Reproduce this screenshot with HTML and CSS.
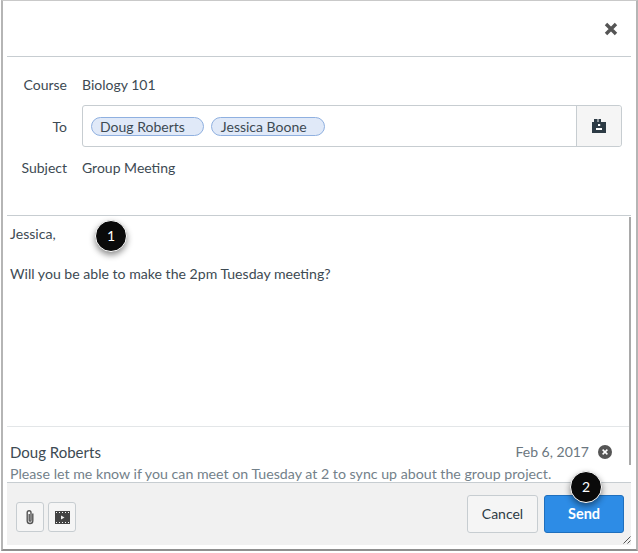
FILE: index.html
```html
<!DOCTYPE html>
<html lang="en">
<head>
<meta charset="utf-8">
<title>Compose Message</title>
<link rel="stylesheet" href="styles.css">
</head>
<body>
<div class="dialog">
  <div class="inner">
    <header class="head">
      <svg class="close" width="14" height="14" viewBox="0 0 14 14"><path d="M2 2l10 10M12 2L2 12" stroke="#555" stroke-width="3.4" fill="none"/></svg>
    </header>
    <section class="fields">
      <div class="row row-course">
        <span class="label">Course</span><span class="value">Biology 101</span>
      </div>
      <div class="row row-to">
        <span class="label">To</span>
        <div class="to-box">
          <div class="to-input">
            <span class="pill">Doug Roberts</span>
            <span class="pill pill-second">Jessica Boone</span>
          </div>
          <div class="to-btn">
            <svg width="14" height="14" viewBox="0 0 14 14"><path fill="#2d3b45" d="M2 0h3.5v3H2zM6.5 0H9v3H6.5zM0 3h14v11H0z"/><path fill="#fff" d="M6 5h2.2v2H6zM4 9h6v2H4z"/></svg>
          </div>
        </div>
      </div>
      <div class="row row-subject">
        <span class="label">Subject</span><span class="value">Group Meeting</span>
      </div>
    </section>
    <section class="body">
      <p class="line">Jessica,</p>
      <p class="line line-2">Will you be able to make the 2pm Tuesday meeting?</p>
      <div class="scrollbar"></div>
    </section>
    <section class="quoted">
      <div class="quoted-top">
        <span class="author">Doug Roberts</span>
        <span class="date">Feb 6, 2017</span>
        <svg class="remove" width="14" height="14" viewBox="0 0 14 14"><circle cx="7" cy="7" r="7" fill="#555"/><path d="M4.6 4.6l4.8 4.8M9.4 4.6l-4.8 4.8" stroke="#fff" stroke-width="1.5"/></svg>
      </div>
      <div class="excerpt">Please let me know if you can meet on Tuesday at 2 to sync up about the group project.</div>
    </section>
    <footer class="foot">
      <div class="tools">
        <button class="tool">
          <svg width="10" height="16" viewBox="0 0 10 16"><path d="M7.8 4.5v7.2a2.8 2.8 0 0 1-5.6 0V3.6a1.9 1.9 0 0 1 3.8 0v7.6a.9.9 0 0 1-1.8 0V5" fill="none" stroke="#555" stroke-width="1.4"/></svg>
        </button>
        <button class="tool">
          <svg width="15" height="13" viewBox="0 0 15 13"><path fill="#444" fill-rule="evenodd" d="M0 0h15v13H0zM1 1v1h1V1zm3 0v1h1V1zm3 0v1h1V1zm3 0v1h1V1zm3 0v1h1V1zM1 11v1h1v-1zm3 0v1h1v-1zm3 0v1h1v-1zm3 0v1h1v-1zm3 0v1h1v-1zM6 4.5v4l3.5-2z"/></svg>
        </button>
      </div>
      <div class="actions">
        <button class="btn btn-cancel">Cancel</button>
        <button class="btn btn-send">Send</button>
      </div>
      <svg class="grip" width="8" height="8" viewBox="0 0 8 8"><path d="M7.5.5l-7 7M7.5 4.5l-3 3" stroke="#555" stroke-width="1"/></svg>
    </footer>
  </div>
  <span class="badge badge-1">1</span>
  <span class="badge badge-2">2</span>
</div>
</body>
</html>
```
FILE: styles.css
```css
* { box-sizing: border-box; }
html, body { margin: 0; padding: 0; background: #fff; }
body {
  width: 638px;
  height: 553px;
  font-family: Lato, "Open Sans", sans-serif;
  font-size: 14px;
  color: #2d3b45;
  overflow: hidden;
}
.dialog {
  position: relative;
  width: 637px;
  height: 551px;
  margin-left: 1px;
  background: #fff;
  border: 1px solid #c9c9c9;
  border-left: 2px solid #b5b5b5;
  border-right: 2px solid #b5b5b5;
  border-bottom: 2px solid #8f8f8f;
  padding: 0 5px 4px 4px;
}
.inner {
  height: 100%;
  display: flex;
  flex-direction: column;
}
.head {
  height: 56px;
  flex: none;
  border-bottom: 1px solid #c7cdd1;
  display: flex;
  justify-content: flex-end;
  align-items: flex-start;
  padding: 21px 13px 0 0;
}
.fields {
  height: 159px;
  flex: none;
  border-bottom: 1px solid #c7cdd1;
  position: relative;
}
.row { display: flex; align-items: center; }
.label {
  width: 60px;
  flex: none;
  text-align: right;
  margin-right: 15px;
  font-size: 14px;
  color: #3d4a53;
}
.value { font-size: 14px; color: #3d4a53; }
.row-course { height: 20px; margin-top: 17px; }
.row-to { height: 42px; margin-top: 11px; }
.row-subject { height: 20px; margin-top: 10px; }
.to-box {
  width: 540px;
  height: 42px;
  border: 1px solid #c7cdd1;
  border-radius: 3px;
  display: flex;
  background: #fff;
}
.to-input {
  flex: 1;
  display: flex;
  align-items: center;
  gap: 7px;
  padding-left: 8px;
}
.pill {
  height: 19px;
  line-height: 18px;
  padding: 0 18px 0 8px;
  border: 1px solid #8fb0e0;
  border-radius: 10px;
  background: #e0e9f8;
  color: #3d4a53;
  font-size: 14px;
}
.pill-second { padding: 0 17px 0 9px; }
.to-btn {
  width: 45px;
  border-left: 1px solid #c7cdd1;
  background: #f5f5f5;
  border-radius: 0 3px 3px 0;
  display: flex;
  align-items: center;
  justify-content: center;
}
.body {
  flex: 1;
  position: relative;
  padding: 8px 3px;
}
.line { margin: 0; height: 19px; line-height: 19px; font-size: 14.1px; color: #3d4a53; }
.line-2 { margin-top: 21px; }
.scrollbar {
  position: absolute;
  top: 1px;
  right: 0;
  bottom: -39px;
  width: 2px;
  background: #a9a9a9;
}
.quoted {
  height: 56px;
  flex: none;
  margin-right: 2px;
  border-top: 1px solid #e3e6e8;
  padding-top: 15px;
  padding-left: 3px;
  overflow: hidden;
}
.quoted-top { display: flex; align-items: center; height: 19px; }
.author { flex: 1; font-size: 15px; color: #3d4a53; }
.date { font-size: 14px; color: #6b7780; }
.remove { margin: 0 17px 0 9px; }
.excerpt { margin-top: 4px; font-size: 14.2px; line-height: 18px; color: #73818a; white-space: nowrap; }
.foot {
  height: 63px;
  flex: none;
  position: relative;
  background: #f1f1f1;
  border-top: 1px solid #c7cdd1;
  display: flex;
  justify-content: space-between;
  padding: 12px 7px 0 9px;
}
.tools { display: flex; gap: 4px; padding-top: 7px; }
.tool {
  width: 28px;
  height: 30px;
  padding: 0;
  background: #f5f5f5;
  border: 1px solid #c7cdd1;
  border-radius: 3px;
  display: flex;
  align-items: center;
  justify-content: center;
}
.actions { display: flex; gap: 6px; }
.btn {
  height: 38px;
  border-radius: 3px;
  font-family: inherit;
  font-size: 14px;
  padding: 0 0 2px;
}
.btn-cancel {
  width: 71px;
  background: #f5f5f5;
  border: 1px solid #c7cdd1;
  color: #2d3b45;
}
.btn-send {
  width: 80px;
  background: #2d8ce6;
  border: 1px solid #1f6fbd;
  color: #fff;
  font-weight: 700;
  font-size: 14.5px;
}
.grip { position: absolute; right: 0; bottom: 1px; }
.close { display: block; }
.badge {
  position: absolute;
  width: 32px;
  height: 32px;
  line-height: 30px;
  text-align: center;
  border-radius: 50%;
  background: #0a0a0a;
  border: 1px solid #fff;
  color: #fff;
  font-size: 14px;
  box-shadow: 0 3px 6px rgba(0,0,0,.45);
}
.badge-1 { left: 92px; top: 219px; }
.badge-2 { left: 567px; top: 470px; }
```
